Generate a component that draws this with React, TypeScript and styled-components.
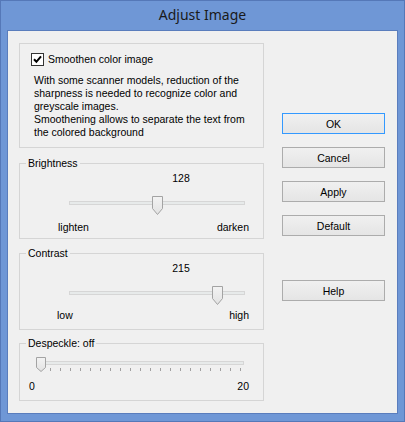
import React from 'react';
import styled, { createGlobalStyle } from 'styled-components';

const GlobalStyle = createGlobalStyle`
  html, body {
    margin: 0;
    padding: 0;
    background: #6f97d6;
  }
  * {
    box-sizing: border-box;
  }
`;

const Window = styled.div`
  width: 405px;
  height: 422px;
  display: flex;
  flex-direction: column;
  background: #6f97d6;
  border: 1px solid #5578b8;
`;

const TitleBar = styled.div`
  height: 29px;
  display: flex;
  align-items: center;
  justify-content: center;
  font-family: 'Noto Sans', 'Open Sans', sans-serif;
  font-size: 14px;
  color: #1a1a1a;
  padding-bottom: 2px;
`;

const Client = styled.div`
  flex: 1;
  margin: 0 6px 7px 6px;
  display: flex;
  background: #f0f0f0;
  border: 1px solid #5a7dbd;
  font-family: 'Liberation Sans', Arial, sans-serif;
  font-size: 10.5px;
  line-height: 13px;
  color: #000;
`;

const LeftColumn = styled.div`
  width: 256px;
  padding: 12px 0 0 11px;
  display: flex;
  flex-direction: column;
`;

const RightColumn = styled.div`
  margin-left: 18px;
  padding-top: 82px;
  display: flex;
  flex-direction: column;
`;

const Group = styled.div<{ $h: number; $mt?: number }>`
  position: relative;
  height: ${(p) => p.$h}px;
  margin-top: ${(p) => p.$mt ?? 0}px;
  border: 1px solid #d5d5d5;
  display: flex;
  flex-direction: column;
`;

const Legend = styled.span`
  position: absolute;
  top: -7px;
  left: 6px;
  padding: 0 2px;
  background: #f0f0f0;
  white-space: nowrap;
`;

const CheckRow = styled.label`
  display: flex;
  align-items: center;
  gap: 4px;
  margin: 9px 0 0 11px;
  height: 13px;
`;

const Paragraph = styled.p`
  margin: 8px 0 0 14px;
`;

const ValueLabel = styled.div`
  margin: 8px 0 0 141px;
  width: 40px;
  text-align: center;
`;

const SliderArea = styled.div<{ $ml: number; $w: number; $h: number; $mt: number }>`
  position: relative;
  margin-left: ${(p) => p.$ml}px;
  margin-top: ${(p) => p.$mt}px;
  width: ${(p) => p.$w}px;
  height: ${(p) => p.$h}px;
`;

const Track = styled.div<{ $top: number }>`
  margin-top: ${(p) => p.$top}px;
  height: 4px;
  background: #e7eaea;
  border: 1px solid #d6d6d6;
`;

const Thumb = styled.svg`
  position: absolute;
  top: 0;
`;

const Ticks = styled.svg`
  display: block;
  margin-top: 3px;
`;

const EndLabels = styled.div<{ $pl: number; $mt: number }>`
  display: flex;
  justify-content: space-between;
  margin-top: ${(p) => p.$mt}px;
  padding: 0 14px 0 ${(p) => p.$pl}px;
`;

const Button = styled.button<{ $focused?: boolean; $mt?: number }>`
  width: 103px;
  height: 21px;
  margin-top: ${(p) => p.$mt ?? 0}px;
  padding: 0;
  font-family: 'Liberation Sans', Arial, sans-serif;
  font-size: 10.5px;
  color: #000;
  background: linear-gradient(#f0f0f0, #e5e5e5);
  border: 1px solid ${(p) => (p.$focused ? '#3399ff' : '#acacac')};
  border-radius: 0;
`;

const CheckBox = () => (
  <svg width="13" height="13" viewBox="0 0 13 13">
    <rect x="0.5" y="0.5" width="12" height="12" fill="#fff" stroke="#333" />
    <path d="M3 6.3 L5.4 8.8 L10 3.4" fill="none" stroke="#000" strokeWidth="2" />
  </svg>
);

const ThumbShape = ({ w, h, tip }: { w: number; h: number; tip: number }) => (
  <>
    <defs>
      <linearGradient id="thumbFill" x1="0" y1="0" x2="0" y2="1">
        <stop offset="0" stopColor="#f3f3f3" />
        <stop offset="1" stopColor="#e2e2e2" />
      </linearGradient>
    </defs>
    <path
      d={`M0.5 0.5 H${w - 0.5} V${h - tip - 0.5} L${w / 2} ${h - 0.5} L0.5 ${h - tip - 0.5} Z`}
      fill="url(#thumbFill)"
      stroke="#a3a3a3"
    />
  </>
);

const ValueSlider = ({ value, max }: { value: number; max: number }) => {
  const trackWidth = 176;
  const center = (value / max) * trackWidth;
  return (
    <SliderArea $ml={49} $w={trackWidth} $h={19} $mt={11}>
      <Track $top={5} />
      <Thumb width="11" height="19" style={{ left: center - 5.5 }}>
        <ThumbShape w={11} h={19} tip={6} />
      </Thumb>
    </SliderArea>
  );
};

const DespeckleSlider = ({ value }: { value: number }) => {
  const steps = 20;
  const step = 10;
  const first = 5.5;
  return (
    <SliderArea $ml={15} $w={211} $h={24} $mt={13}>
      <Track $top={4} style={{ marginLeft: 2, marginRight: 2 }} />
      <Thumb width="10" height="15" style={{ left: first + value * step - 5 }}>
        <ThumbShape w={10} h={15} tip={4} />
      </Thumb>
      <Ticks width="211" height="3">
        {Array.from({ length: steps + 1 }, (_, i) => (
          <line
            key={i}
            x1={first + i * step}
            x2={first + i * step}
            y1="0"
            y2="3"
            stroke="#a0a0a0"
          />
        ))}
      </Ticks>
    </SliderArea>
  );
};

const App: React.FC = () => {
  return (
    <>
      <GlobalStyle />
      <Window>
        <TitleBar>Adjust Image</TitleBar>
        <Client>
          <LeftColumn>
            <Group $h={105}>
              <CheckRow>
                <CheckBox />
                <span>Smoothen color image</span>
              </CheckRow>
              <Paragraph>
                With some scanner models, reduction of the
                <br />
                sharpness is needed to recognize color and
                <br />
                greyscale images.
                <br />
                Smoothening allows to separate the text from
                <br />
                the colored background
              </Paragraph>
            </Group>

            <Group $h={76} $mt={15}>
              <Legend>Brightness</Legend>
              <ValueLabel>128</ValueLabel>
              <ValueSlider value={128} max={255} />
              <EndLabels $pl={38} $mt={6}>
                <span>lighten</span>
                <span>darken</span>
              </EndLabels>
            </Group>

            <Group $h={77} $mt={14}>
              <Legend>Contrast</Legend>
              <ValueLabel>215</ValueLabel>
              <ValueSlider value={215} max={255} />
              <EndLabels $pl={37} $mt={4}>
                <span>low</span>
                <span>high</span>
              </EndLabels>
            </Group>

            <Group $h={58} $mt={13}>
              <Legend>Despeckle: off</Legend>
              <DespeckleSlider value={0} />
              <EndLabels $pl={9} $mt={-1}>
                <span>0</span>
                <span>20</span>
              </EndLabels>
            </Group>
          </LeftColumn>

          <RightColumn>
            <Button $focused>OK</Button>
            <Button $mt={13}>Cancel</Button>
            <Button $mt={13}>Apply</Button>
            <Button $mt={13}>Default</Button>
            <Button $mt={44}>Help</Button>
          </RightColumn>
        </Client>
      </Window>
    </>
  );
};

export default App;
